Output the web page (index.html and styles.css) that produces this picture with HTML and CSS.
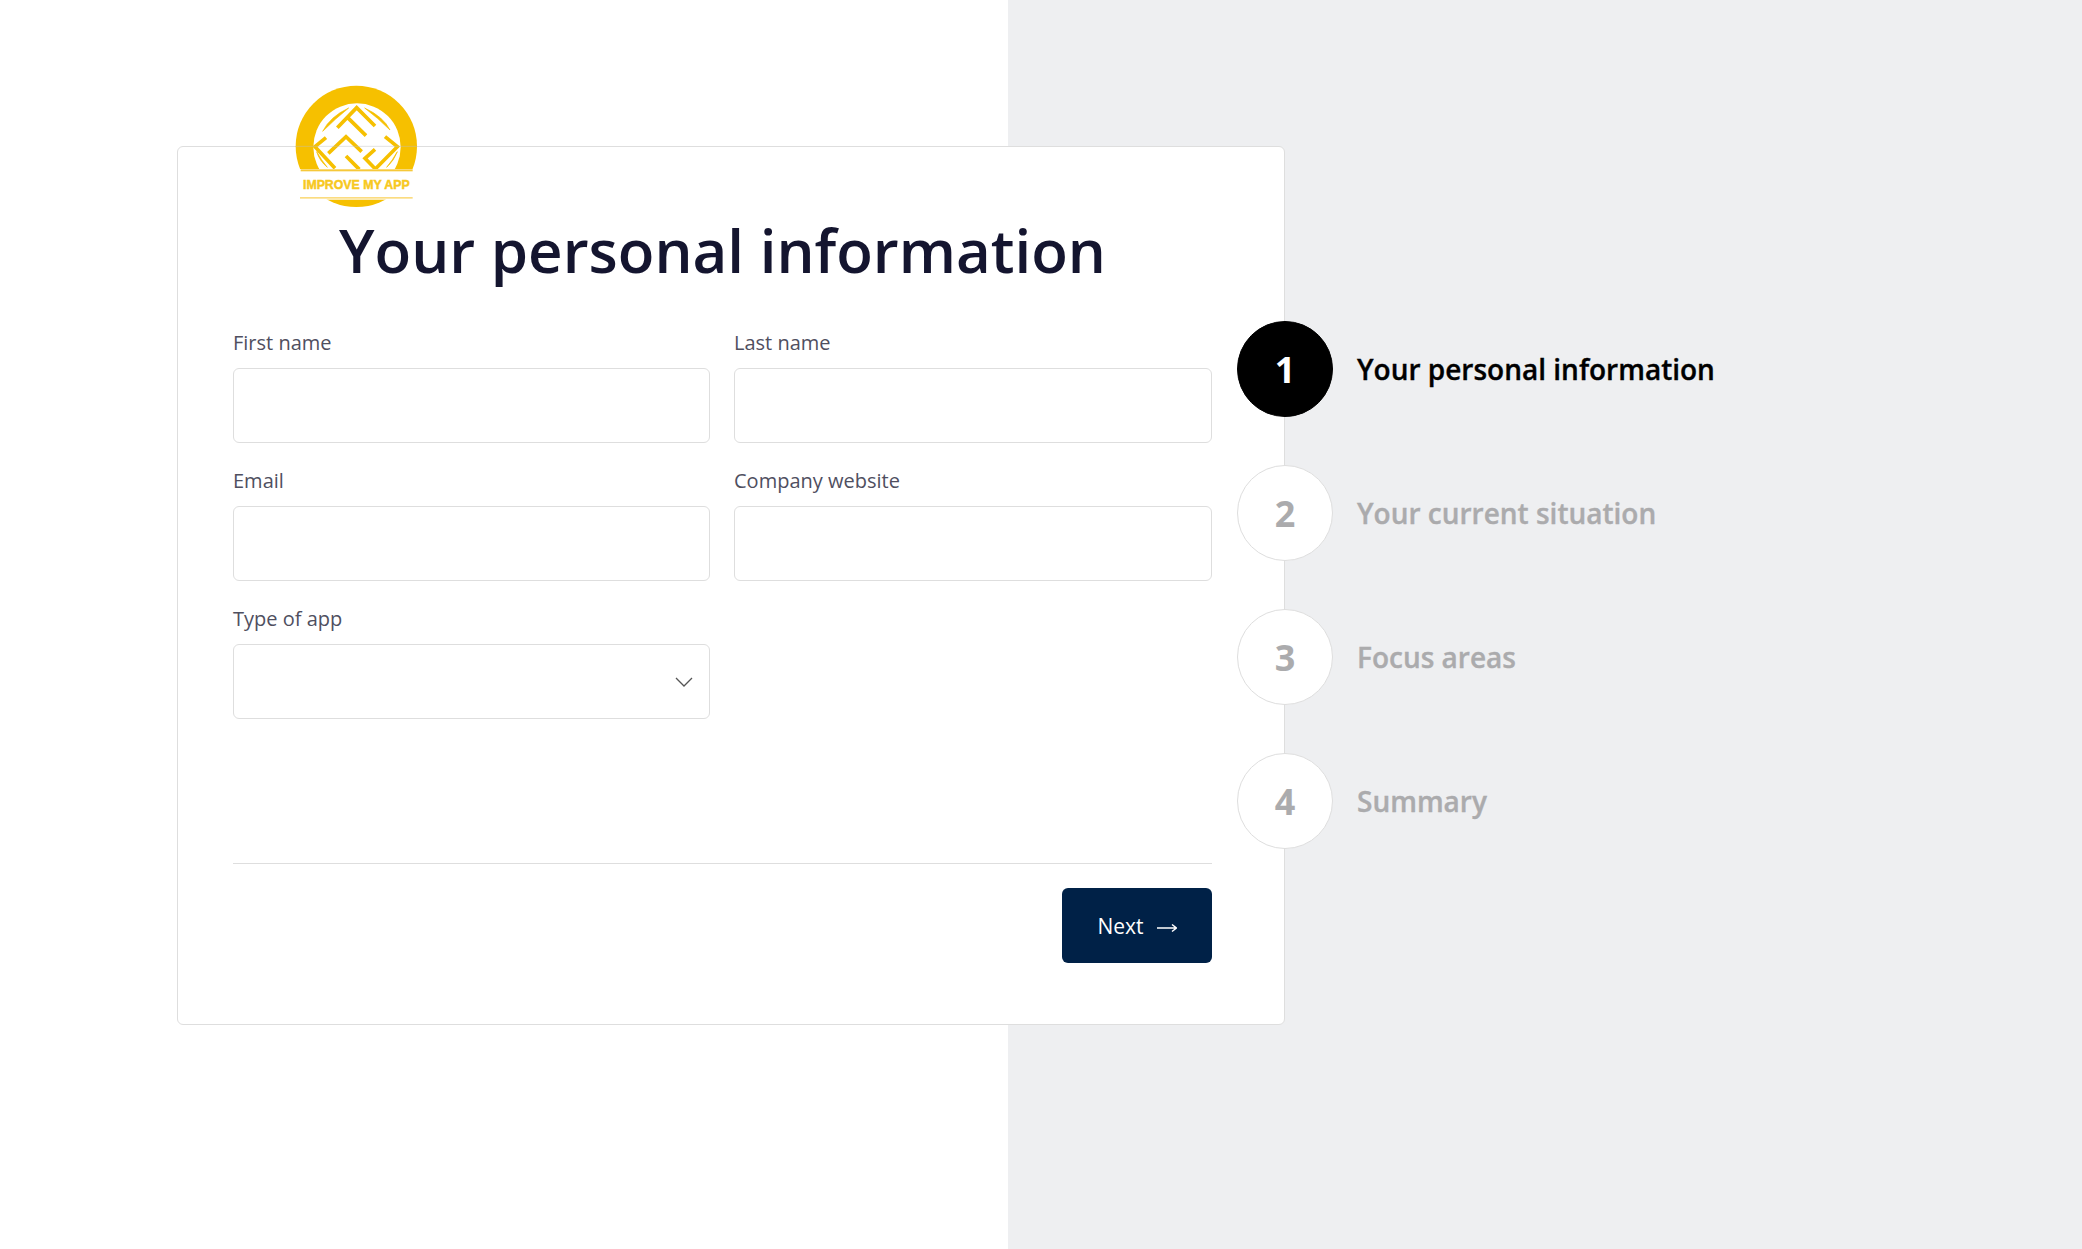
FILE: index.html
```html
<!DOCTYPE html>
<html lang="en">
<head>
<meta charset="utf-8">
<title>Your personal information</title>
<link rel="stylesheet" href="styles.css">
</head>
<body>
<main class="page">
  <section class="card">
    <svg class="logo" viewBox="0 0 510 450" width="170" height="150" aria-label="Improve My App">
      <circle class="logo-disc" cx="259" cy="229" r="182"/>
      <circle class="logo-hole" cx="261" cy="231" r="131"/>
      <path class="logo-leaf" d="M158 184Q180 140 236 114Q196 146 158 184ZM284 114Q340 140 360 180Q324 144 284 114ZM140 245Q148 272 172 292Q154 270 140 245ZM382 245Q372 272 350 292Q368 270 382 245Z"/>
      <path class="logo-maze" d="M202 173L260 113L315 168M230 140L288 197M168 203L135 230L195 295M175 250L228 200L275 245M228 258L268 298M345 200L382 230L316 297L285 265L315 238"/>
      <rect class="logo-band" x="90" y="297" width="340" height="92"/>
      <rect class="logo-rule" x="92" y="298" width="336" height="6"/>
      <rect class="logo-rule-light" x="90" y="381" width="338" height="5"/>
      <text class="logo-text" x="259" y="357" text-anchor="middle" textLength="320" lengthAdjust="spacingAndGlyphs">IMPROVE MY APP</text>
      <line class="logo-edge" x1="77" y1="229" x2="441" y2="229"/>
    </svg>
    <h1 class="title">Your personal information</h1>
    <form class="form">
      <div class="field"><label class="label" for="first">First name</label><input class="control" id="first" type="text"></div>
      <div class="field"><label class="label" for="last">Last name</label><input class="control" id="last" type="text"></div>
      <div class="field"><label class="label" for="email">Email</label><input class="control" id="email" type="text"></div>
      <div class="field"><label class="label" for="site">Company website</label><input class="control" id="site" type="text"></div>
      <div class="field"><label class="label" for="type">Type of app</label>
        <div class="select-wrap">
          <select class="control select" id="type"><option></option></select>
          <svg class="chevron" viewBox="0 0 18 10" width="18" height="10"><path d="M1 1L9 9L17 1"/></svg>
        </div>
      </div>
    </form>
    <footer class="actions">
      <button class="next" type="button">Next<svg class="arrow" viewBox="0 0 20 10" width="20" height="10"><path d="M0 5H19.5M15 1.5L19.5 5L15 8.5"/></svg></button>
    </footer>
  </section>
  <ol class="steps">
    <li class="step active"><span class="bubble">1</span><span class="step-name">Your personal information</span></li>
    <li class="step"><span class="bubble">2</span><span class="step-name">Your current situation</span></li>
    <li class="step"><span class="bubble">3</span><span class="step-name">Focus areas</span></li>
    <li class="step"><span class="bubble">4</span><span class="step-name">Summary</span></li>
  </ol>
</main>
</body>
</html>
```
FILE: styles.css
```css
* { box-sizing: border-box; }
html, body { margin: 0; height: 100%; }
body {
  font-family: "Open Sans", "Noto Sans", sans-serif;
  background: linear-gradient(90deg, #fff 1008px, #eeeff1 1008px);
  min-height: 1249px;
}
.page {
  display: flex;
  align-items: flex-start;
  padding: 146px 0 0 177px;
}
.card {
  position: relative;
  width: 1108px;
  height: 879px;
  padding: 71px 72px 0 55px;
  background: #fff;
  border: 1px solid #dedede;
  border-radius: 6px;
  display: flex;
  flex-direction: column;
}
.logo {
  position: absolute;
  left: 92px;
  top: -77px;
}
.logo-disc { fill: #f6c000; }
.logo-hole { fill: #fff; }
.logo-leaf { fill: #f6c000; stroke: #f6c000; stroke-width: 2; }
.logo-maze { fill: none; stroke: #f6c000; stroke-width: 11; }
.logo-band { fill: #fff; }
.logo-rule { fill: #f6c83a; }
.logo-rule-light { fill: #fbdc80; }
.logo-edge { stroke: rgba(190, 190, 190, 0.45); stroke-width: 3; }
.logo-text {
  font-family: "Liberation Sans", sans-serif;
  font-weight: 700;
  font-size: 41px;
  fill: #f7c820;
  stroke: #f7c820;
  stroke-width: 1.5;
}
.title {
  margin: 0;
  text-align: center;
  font-size: 60px;
  line-height: 64px;
  font-weight: 600;
  color: #14152f;
}
.form {
  margin-top: 46px;
  display: grid;
  grid-template-columns: 477px 478px;
  column-gap: 24px;
  row-gap: 23px;
}
.field { display: flex; flex-direction: column; }
.label {
  font-size: 20px;
  line-height: 30px;
  margin-bottom: 10px;
  font-weight: 500;
  color: #4f4f5f;
}
.control {
  display: block;
  width: 100%;
  height: 75px;
  border: 1px solid #dedede;
  border-radius: 6px;
  background: #fff;
  font: inherit;
  padding: 0 16px;
  appearance: none;
}
.select-wrap { position: relative; }
.chevron {
  position: absolute;
  right: 17px;
  top: 33px;
  fill: none;
  stroke: #555;
  stroke-width: 1.3;
}
.actions {
  margin-top: 144px;
  border-top: 1px solid #dedede;
  padding-top: 24px;
  display: flex;
  justify-content: flex-end;
}
.next {
  width: 150px;
  height: 75px;
  padding: 0;
  border: 0;
  border-radius: 6px;
  background: #002147;
  color: #fff;
  font: inherit;
  font-size: 21px;
  display: flex;
  align-items: center;
  justify-content: center;
  gap: 13px;
  cursor: pointer;
}
.arrow {
  margin-top: 5px;
  fill: none;
  stroke: #fff;
  stroke-width: 1.5;
}
.steps {
  list-style: none;
  margin: 175px 0 0 -48px;
  padding: 0;
  display: flex;
  flex-direction: column;
  gap: 48px;
  position: relative;
}
.step {
  display: flex;
  align-items: center;
  gap: 24px;
  color: #ababad;
  font-weight: 600;
  font-size: 28px;
}
.step-name { -webkit-text-stroke: 0.35px currentColor; }
.bubble {
  width: 96px;
  height: 96px;
  border-radius: 50%;
  background: #fff;
  border: 1px solid #dedede;
  display: flex;
  align-items: center;
  justify-content: center;
  font-size: 36px;
  font-weight: 700;
}
.active { color: #000; }
.active .bubble { background: #000; border-color: #000; color: #fff; }
```
